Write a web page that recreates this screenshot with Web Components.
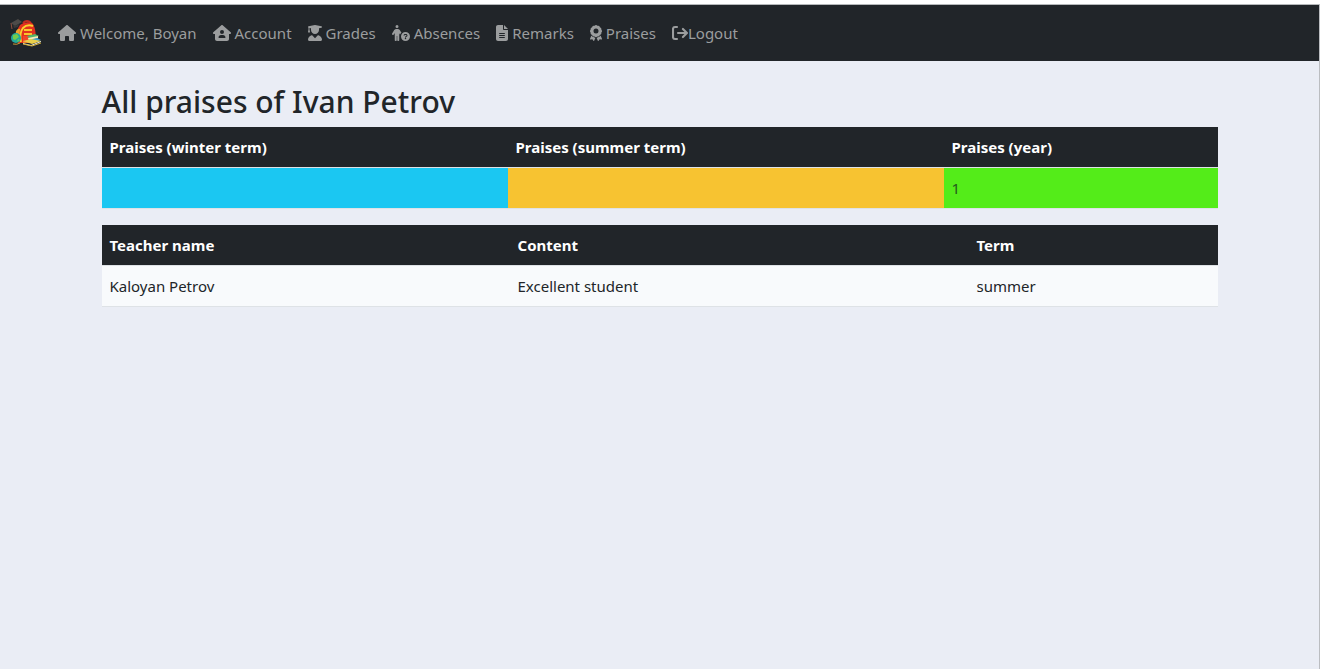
<!DOCTYPE html>
<html lang="en">
<head>
<meta charset="utf-8">
<meta name="viewport" content="width=device-width, initial-scale=1">
<title>All praises</title>
<style>
html, body { margin: 0; height: 100%; }
body { background: #fff; color: #212529; font: 15px/24px "Noto Sans", "Open Sans", sans-serif; }
</style>
</head>
<body>
<school-app>
  <school-nav slot="nav">
    <nav-link icon="home">Welcome, Boyan</nav-link>
    <nav-link icon="account">Account</nav-link>
    <nav-link icon="grades">Grades</nav-link>
    <nav-link icon="absences">Absences</nav-link>
    <nav-link icon="remarks">Remarks</nav-link>
    <nav-link icon="praises">Praises</nav-link>
    <nav-link icon="logout" tight>Logout</nav-link>
  </school-nav>
  <praise-page student="Ivan Petrov"></praise-page>
</school-app>

<script>
const attach = (el, html) => { el.attachShadow({ mode: 'open' }).innerHTML = html; };

const ICONS = {
  home: [576, '<path d="M576 256c0 18-15 32-32 32h-32v184c0 22-18 40-40 40h-80c-22 0-40-18-40-40v-88c0-18-14-32-32-32h-64c-18 0-32 14-32 32v88c0 22-18 40-40 40h-80c-22 0-40-18-40-40V288H32c-18 0-32-14-32-32 0-9 3-17 10-24L266 8c7-6 15-8 22-8s15 2 21 7l256 225c8 7 11 15 11 24z"/>'],
  account: [576, '<path fill-rule="evenodd" d="M309 7c-12-10-30-10-42 0L10 232c-7 7-10 15-10 24 0 18 14 32 32 32h32v160c0 35 29 64 64 64h320c35 0 64-29 64-64V288h32c17 0 32-14 32-32 0-9-3-17-11-24zM288 160a64 64 0 1 1 0 128 64 64 0 1 1 0-128zM176 400c0-44 36-80 80-80h64c44 0 80 36 80 80 0 9-7 16-16 16H192c-9 0-16-7-16-16z"/>'],
  grades: [448, '<path d="M219 1c3-1 7-1 10 0l200 40c11 2 19 12 19 23s-8 21-19 23l-77 16v57c0 71-57 128-128 128S96 231 96 160v-57l-48-9v49l16 77c1 5 0 10-3 14s-7 6-12 6H16c-5 0-9-2-12-6s-4-9-4-14l16-77V86C7 81 0 73 0 64c0-11 8-21 19-23z"/><path d="M112 326c11-3 22 2 29 11l83 87 83-87c7-9 18-14 29-11 65 19 112 79 112 149 0 20-17 37-37 37H37c-20 0-37-17-37-37 0-70 47-130 112-149z"/>'],
  absences: [576, '<path d="M112 48a48 48 0 1 1 96 0 48 48 0 1 1-96 0zm40 304v128c0 18-14 32-32 32s-32-14-32-32V257l-29 47c-9 15-28 20-44 11-15-9-20-29-11-44l58-97c17-29 49-46 83-46h30c34 0 65 17 83 46l44 74c-20 14-36 33-46 55l-24-40v217c0 18-14 32-32 32s-32-14-32-32V352z"/><path fill-rule="evenodd" d="M432 224a144 144 0 1 1 0 288 144 144 0 1 1 0-288zm0 184a24 24 0 1 0 0 48 24 24 0 1 0 0-48zm-64-72h32c0-12 8-20 20-20h23c14 0 21 8 21 19 0 9-3 13-12 18l-36 22v21h32v-7l20-12c18-10 28-24 28-43 0-30-23-50-52-50h-23c-30 0-53 22-53 52z"/>'],
  remarks: [384, '<path fill-rule="evenodd" d="M64 0C29 0 0 29 0 64v384c0 35 29 64 64 64h256c35 0 64-29 64-64V160H256c-18 0-32-14-32-32V0zM256 0v128h128zM112 256h160c9 0 16 7 16 16s-7 16-16 16H112c-9 0-16-7-16-16s7-16 16-16zm0 64h160c9 0 16 7 16 16s-7 16-16 16H112c-9 0-16-7-16-16s7-16 16-16zm0 64h160c9 0 16 7 16 16s-7 16-16 16H112c-9 0-16-7-16-16s7-16 16-16z"/>'],
  praises: [384, '<path fill-rule="evenodd" d="M173 5c12-7 26-7 38 0l27 16 31 1c14 1 26 9 33 20l15 28 26 16c12 7 19 19 20 33l1 30 16 27c7 12 7 26 0 38l-16 27-1 31c-1 14-8 26-20 33l-27 15-15 27c-7 12-19 19-33 20l-31 1-27 16c-12 7-26 7-38 0l-27-16-31-1c-14-1-26-8-33-20l-15-27-26-15c-12-7-19-20-20-33l-1-31-16-27c-7-12-7-26 0-38l16-27 1-31c1-14 8-26 20-33l26-15 15-27c7-12 19-20 33-20l31-1zM192 112a80 80 0 1 0 0 160 80 80 0 1 0 0-160z"/><path d="M1 443l44-104c15 26 33 40 62 41 34 2 45 22 67 28l-41 95c-4 9-17 12-24 3l-34-50-54 8c-14 1-26-10-20-21zM383 443l-44-104c-15 26-33 40-62 41-34 2-45 22-67 28l41 95c4 9 17 12 24 3l34-50 54 8c14 1 26-10 20-21z"/>'],
  logout: [512, '<path d="M160 64H96c-36 0-64 28-64 64v256c0 36 28 64 64 64h64M192 256h280M350 128l128 128-128 128" fill="none" stroke="currentColor" stroke-width="68" stroke-linecap="round" stroke-linejoin="round"/>']
};

customElements.define('nav-link', class extends HTMLElement {
  connectedCallback() {
    const [w, art] = ICONS[this.getAttribute('icon')];
    attach(this, `<style>
      :host { display: block; }
      a { display: flex; align-items: center; gap: 4px; padding: 8px; color: #9b9d9e; text-decoration: none; white-space: nowrap; }
      :host([tight]) a { gap: 0; }
      a:hover { color: #c8c9ca; }
      svg { display: block; height: 16px; flex: none; fill: currentColor; }
    </style>
    <a href="#"><svg viewBox="0 0 ${w} 512" width="${w / 32}" aria-hidden="true">${art}</svg><span><slot></slot></span></a>`);
  }
});

customElements.define('school-nav', class extends HTMLElement {
  connectedCallback() {
    attach(this, `<style>
      :host { display: block; background: #212529; border-top: 1px solid #b5b8ba; }
      nav { display: flex; flex-wrap: wrap; align-items: center; padding: 8px 10px; }
      .brand { display: block; margin-right: 8px; }
      .brand svg { display: block; }
    </style>
    <nav aria-label="Main">
      <a class="brand" href="#" aria-label="School diary">
        <svg width="32" height="32" viewBox="0 0 32 32">
          <path d="M13 6q4-4 8 0" fill="none" stroke="#c42a20" stroke-width="2"/>
          <path d="M8 26Q5 14 10 8q5-4 12-2 4 3 4 20z" fill="#e2301f"/>
          <path d="M6 14q2-3 4-2l-1 12-4-2z" fill="#f2a02a"/>
          <path d="M11 25q-2-9 2-14 4-4 10-2" fill="none" stroke="#fbd02d" stroke-width="2"/>
          <path d="M14 13h8M14 17h8" fill="none" stroke="#fbc42b" stroke-width="2"/>
          <path d="M13 19h7v6h-7z" fill="#f0452a"/>
          <path d="M13 25h7" stroke="#fbc42b" stroke-width="1"/>
          <path d="M1 6l7-4 4 3-7 4z" fill="#4d4b49"/>
          <path d="M3 8l1 3 4-1 1-3-4 2z" fill="#3b3938"/>
          <path d="M1 6l1 6" stroke="#8a5040"/>
          <circle cx="6" cy="21" r="5" fill="#22a89c"/>
          <path d="M3 18l4-1 2 3-4 3-2-1zm5 4l2 1-3 2z" fill="#74cc4a"/>
          <path d="M3 27q4 1 7-1" fill="none" stroke="#c99a35"/>
          <path d="M17 19l8-2 4 2-9 3z" fill="#51b36a"/>
          <path d="M18 21l10-2v2l-9 3z" fill="#f6ecb4"/>
          <path d="M18 23l9-2 4 2-9 3z" fill="#3d9fca"/>
          <path d="M13 24l8-2 10 2-9 3z" fill="#e9cf4c"/>
          <path d="M13 26l8 2 10-4v1l-10 4-8-2z" fill="#f1f3e4"/>
          <path d="M13 27l9 2 9-3" fill="none" stroke="#d4ae35"/>
        </svg>
      </a>
      <slot></slot>
    </nav>`);
  }
});

customElements.define('praise-page', class extends HTMLElement {
  connectedCallback() {
    attach(this, `<style>
      :host { display: block; box-sizing: border-box; max-width: 1140px; margin: 0 auto; padding: 22px 12px; }
      h1 { margin: 0 0 6px; font-size: 30px; line-height: 38px; font-weight: 500; }
      table { width: 100%; margin: 0 0 16px; border-collapse: collapse; text-align: left; }
      th, td { padding: 8px; }
      th { background: #212529; color: #fff; font-weight: 700; }
      td { border-top: 1px solid #dee2e6; border-bottom: 1px solid #dee2e6; }
      .totals td { height: 24px; }
      .winter { background: #1bc7f2; }
      .summer { background: #f7c331; }
      .year { background: #54ec19; color: #245a1e; }
      .list td { background: #f8fafc; }
    </style>
    <h1>All praises of ${this.getAttribute('student')}</h1>
    <table class="totals">
      <colgroup><col width="406"><col width="436"><col width="274"></colgroup>
      <thead><tr><th scope="col">Praises (winter term)</th><th scope="col">Praises (summer term)</th><th scope="col">Praises (year)</th></tr></thead>
      <tbody><tr><td class="winter"></td><td class="summer"></td><td class="year">1</td></tr></tbody>
    </table>
    <table class="list">
      <colgroup><col width="408"><col width="459"><col width="249"></colgroup>
      <thead><tr><th scope="col">Teacher name</th><th scope="col">Content</th><th scope="col">Term</th></tr></thead>
      <tbody><tr><td>Kaloyan Petrov</td><td>Excellent student</td><td>summer</td></tr></tbody>
    </table>`);
  }
});

customElements.define('school-app', class extends HTMLElement {
  connectedCallback() {
    attach(this, `<style>
      :host { display: flex; box-sizing: border-box; min-height: 100%; padding: 4px 1px 0 0; }
      .frame { flex: 1; min-width: 0; background: #eaedf5; border-right: 1px solid #bbbdc1; }
    </style>
    <div class="frame"><slot name="nav"></slot><main><slot></slot></main></div>`);
  }
});
</script>
</body>
</html>
